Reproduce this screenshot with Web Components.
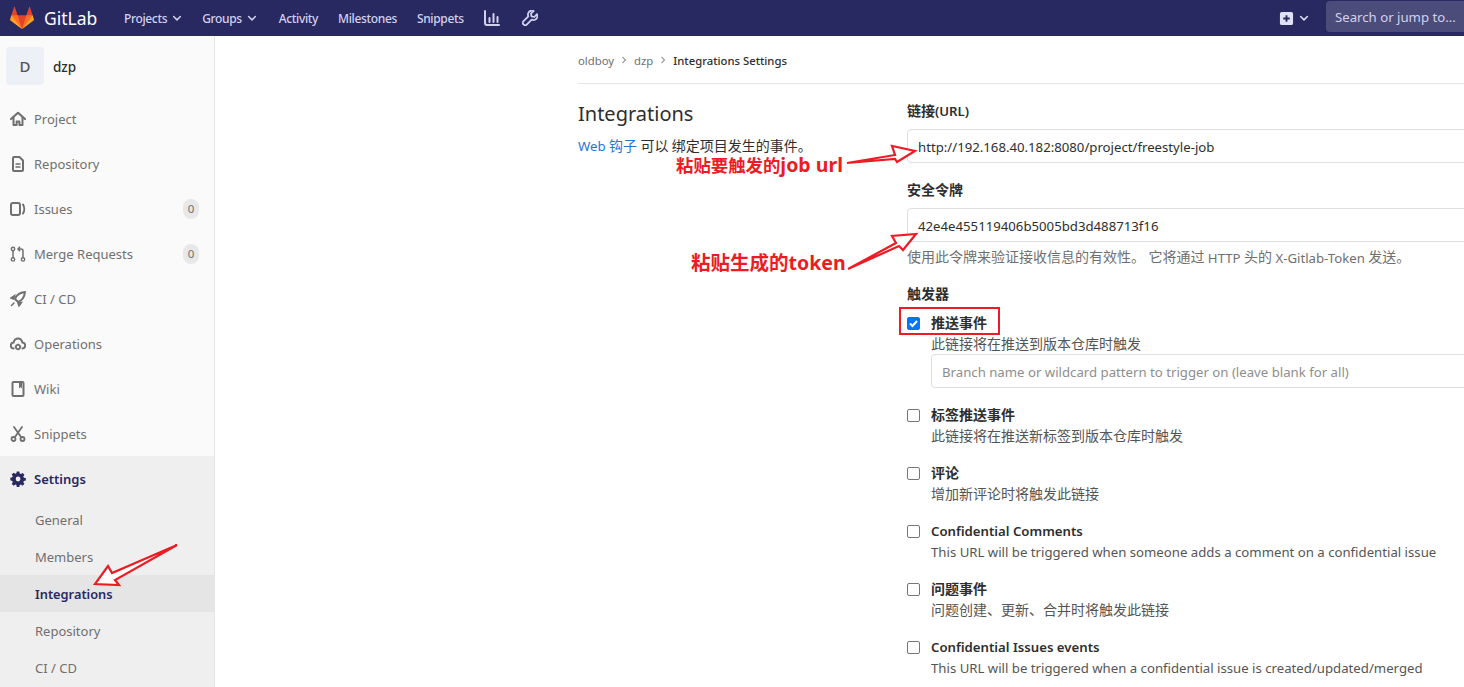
<!DOCTYPE html>
<html lang="zh">
<head>
<meta charset="utf-8">
<title>Integrations Settings</title>
<style>
    html, body {
        margin: 0;
        height: 687px;
        overflow: hidden;
        background: #fff;
        font-family: "Noto Sans", "Noto Sans CJK SC", sans-serif;
        font-size: 14px;
        color: #2e2e2e;
    }
</style>
</head>
<body>
<gl-app></gl-app>

<script>
const ICONS = {
    home: '<path d="M1 8 8 1.800 15 8" fill="none" stroke="currentColor" stroke-width="2.200" stroke-linejoin="round" stroke-linecap="round"/><path d="M3.500 6.500V14h3.100v-3.600h2.800V14h3.100V6.500" fill="none" stroke="currentColor" stroke-width="2" stroke-linejoin="round" stroke-linecap="round"/>',
    doc: '<path d="M3.500 1h6L13 4.500V14a1 1 0 0 1-1 1H4a1 1 0 0 1-1-1V2z" fill="none" stroke="currentColor" stroke-width="2" stroke-linejoin="round"/><path d="M5.500 8h5M5.500 11h5" stroke="currentColor" stroke-width="1.600"/>',
    issues: '<rect x="1" y="2" width="9" height="12" rx="2" fill="none" stroke="currentColor" stroke-width="2"/><path d="M13 3.500c1.600 2.500 1.600 6.500 0 9" fill="none" stroke="currentColor" stroke-width="2" stroke-linecap="round"/>',
    merge: '<circle cx="3" cy="3" r="1.700" fill="none" stroke="currentColor" stroke-width="1.400"/><circle cx="3" cy="13.400" r="1.700" fill="none" stroke="currentColor" stroke-width="1.400"/><circle cx="13" cy="13.400" r="1.700" fill="none" stroke="currentColor" stroke-width="1.400"/><path d="M3 5v6.600M13 11.600V5a2 2 0 0 0-2-2H8.500M10 .8 8 3l2 2.200" fill="none" stroke="currentColor" stroke-width="1.500"/>',
    rocket: '<path d="M15 1C10 1.500 6.500 4 5 8l3 3c4-1.500 6.500-5 7-10z" fill="none" stroke="currentColor" stroke-width="2" stroke-linejoin="round"/><path d="M4.500 4.500 1 7l2.500 1zM8 12l1 3 2.500-3.500zM1.500 14.500 4 12" fill="currentColor" stroke="currentColor" stroke-width="1.500" stroke-linecap="round"/>',
    cloud: '<path d="M3.500 12.500C1.800 12.300.8 11 .8 9.500c0-1.600 1.200-2.900 2.800-3C4.200 4 5.900 2.500 8 2.500s3.800 1.500 4.400 4c1.600.1 2.800 1.400 2.800 3 0 1.500-1 2.800-2.700 3" fill="none" stroke="currentColor" stroke-width="2" stroke-linecap="round"/><circle cx="8" cy="11" r="2.100" fill="none" stroke="currentColor" stroke-width="1.800"/><path d="M8 7.800v1M8 13.200v1M4.800 11h1M10.200 11h1" stroke="currentColor" stroke-width="1.600"/>',
    book: '<rect x="2.500" y="1" width="11" height="14" rx="1" fill="none" stroke="currentColor" stroke-width="2"/><path d="M9 1h3v6.500L10.500 6 9 7.500z" fill="currentColor"/>',
    scissors: '<circle cx="3.500" cy="13" r="2" fill="none" stroke="currentColor" stroke-width="1.800"/><circle cx="12.500" cy="13" r="2" fill="none" stroke="currentColor" stroke-width="1.800"/><path d="M4.800 11.300 12 1M11.200 11.300 4 1" stroke="currentColor" stroke-width="1.800" stroke-linecap="round"/>',
    gear: '<path fill-rule="evenodd" fill="currentColor" d="M6.600.5h2.800l.4 2.100 1.300.6 1.800-1.200 2 2-1.200 1.800.6 1.300 2.100.4v2.800l-2.100.4-.6 1.300 1.200 1.800-2 2-1.800-1.200-1.300.6-.4 2.100H6.600l-.4-2.100-1.300-.6-1.800 1.200-2-2 1.200-1.800-.6-1.300L-.4 10V7.200l2.100-.4.6-1.300L1.100 3.700l2-2 1.800 1.200 1.300-.6zM8 6a2.600 2.600 0 1 0 0 5.200A2.600 2.600 0 0 0 8 6z" transform="translate(.7 .1) scale(.92)"/>',
    chart: '<path d="M1 1v12a2 2 0 0 0 2 2h12" fill="none" stroke="currentColor" stroke-width="2" stroke-linecap="round"/><path d="M5.500 8v4M9.500 4v8M13.500 7v5" stroke="currentColor" stroke-width="2" stroke-linecap="round"/>',
    wrench: '<path d="M15 4.200 12.300 7 9.500 6.300 8.900 3.600 11.700 1C9.500.2 7.200 1 6.300 3c-.5 1.100-.4 2.300 0 3.300L1.300 11.300a2 2 0 0 0 0 2.900l.5.500a2 2 0 0 0 2.900 0l5-5c1 .4 2.300.5 3.400 0 2-.9 2.800-3.300 1.900-5.500z" fill="none" stroke="currentColor" stroke-width="1.800" stroke-linejoin="round"/>',
    plus: '<path fill-rule="evenodd" fill="currentColor" d="M3 1h10a2 2 0 0 1 2 2v10a2 2 0 0 1-2 2H3a2 2 0 0 1-2-2V3a2 2 0 0 1 2-2zm4 3.500V7H4.500v2H7v2.500h2V9h2.500V7H9V4.500z"/>',
    chevron: '<path d="M3.500 6 8 10.500 12.500 6" fill="none" stroke="currentColor" stroke-width="2" stroke-linecap="round" stroke-linejoin="round"/>'
};

const icon = (name, size) => `<svg width="${size}" height="${size}" viewBox="0 0 16 16" aria-hidden="true">${ICONS[name]}</svg>`;

// chinese runs are set a bit bigger than the latin around them
const zh = (text) => text.replace(/[\u3000-\u9fff\uff00-\uffef]+/g, (run) => `<span class="zh">${run}</span>`);

class GlNavbar extends HTMLElement {
    constructor() {
        super();
        this.attachShadow({ mode: 'open' });
        this.shadowRoot.innerHTML = `
            <style>
                :host {
                    display: flex;
                    align-items: center;
                    height: 36px;
                    width: 1626px;
                    flex: none;
                    background: #292961;
                    color: #d1d1f0;
                    font-size: 12px;
                    letter-spacing: -.35px;
                    font-weight: 500;
                }
                .logo {
                    display: flex;
                    align-items: center;
                    margin-left: 10px;
                    width: 114px;
                    color: #fff;
                    font-size: 17.500px;
                    letter-spacing: 0;
                    font-weight: 400;
                }
                .logo svg { margin-right: 10px; }
                a {
                    display: flex;
                    align-items: center;
                    margin-right: 20px;
                    white-space: nowrap;
                }
                a svg { margin: 0 -1px 0 4px; }
                .wide { margin-right: 22px; }
                .tool { margin-right: 22px; }
                .tool svg { margin: 0; display: block; }
                .create {
                    display: flex;
                    align-items: center;
                    gap: 4px;
                    margin-left: auto;
                    color: #e1e1f5;
                }
                .search {
                    margin-left: 16px;
                    width: 300px;
                    height: 31px;
                    line-height: 33px;
                    margin-top: -3px;
                    box-sizing: border-box;
                    padding-left: 9px;
                    border-radius: 4px;
                    background: #4c4c7a;
                    color: #d1d1f0;
                    font-size: 13.200px;
                    letter-spacing: 0;
                    font-weight: 400;
                }
            </style>
            <div class="logo">
                <svg width="24" height="24" viewBox="0 0 36 36" aria-hidden="true">
                    <path fill="#e24329" d="M2 14l9.380 9v-9l-4-12.280c-.205-.632-1.176-.632-1.380 0z"/>
                    <path fill="#e24329" d="M34 14l-9.380 9v-9l4-12.280c.205-.632 1.176-.632 1.380 0z"/>
                    <path fill="#e24329" d="M18 34.380 3 14h30z"/>
                    <path fill="#fc6d26" d="M18 34.380 11.380 14H2l4 11z"/>
                    <path fill="#fc6d26" d="M18 34.380 24.620 14H34l-4 11z"/>
                    <path fill="#fca326" d="M2 14 .1 20.160c-.18.565 0 1.200.5 1.560l17.420 12.660z"/>
                    <path fill="#fca326" d="M34 14l1.900 6.160c.18.565 0 1.200-.5 1.560L18 34.380z"/>
                </svg>
                GitLab
            </div>
            <a>Projects ${icon('chevron', 12)}</a>
            <a class="wide">Groups ${icon('chevron', 12)}</a>
            <a>Activity</a>
            <a>Milestones</a>
            <a>Snippets</a>
            <a class="tool">${icon('chart', 16)}</a>
            <a class="tool">${icon('wrench', 16)}</a>
            <div class="create">${icon('plus', 15)}${icon('chevron', 12)}</div>
            <div class="search">Search or jump to...</div>
        `;
    }
}

class GlNavItem extends HTMLElement {
    constructor() {
        super();
        this.attachShadow({ mode: 'open' });
        const name = this.getAttribute('icon');
        const count = this.getAttribute('count');
        this.shadowRoot.innerHTML = `
            <style>
                :host {
                    display: flex;
                    align-items: center;
                    height: 45px;
                    padding: 0 15px 0 10px;
                    color: #707070;
                    font-size: 13px;
                }
                :host([active]) {
                    color: #292961;
                    font-weight: 600;
                }
                svg { margin-right: 8px; flex: none; }
                .count {
                    margin-left: auto;
                    min-width: 16px;
                    height: 20px;
                    line-height: 20px;
                    text-align: center;
                    border-radius: 10px;
                    background: #e8e8e8;
                    font-size: 11.500px;
                }
            </style>
            ${icon(name, 16)}
            <slot></slot>
            ${count ? `<span class="count">${count}</span>` : ''}
        `;
    }
}

class GlSubItem extends HTMLElement {
    constructor() {
        super();
        this.attachShadow({ mode: 'open' });
        this.shadowRoot.innerHTML = `
            <style>
                :host {
                    display: block;
                    height: 37px;
                    line-height: 39px;
                    padding-left: 35px;
                    color: #707070;
                    font-size: 13px;
                }
                :host([active]) {
                    background: #e5e5e5;
                    color: #292961;
                    font-size: 12.800px;
                    font-weight: 600;
                }
            </style>
            <slot></slot>
        `;
    }
}

class GlSidebar extends HTMLElement {
    constructor() {
        super();
        this.attachShadow({ mode: 'open' });
        this.shadowRoot.innerHTML = `
            <style>
                :host {
                    display: block;
                    flex: none;
                    width: 214px;
                    height: 651px;
                    overflow: hidden;
                    background: #fafafa;
                    border-right: 1px solid #e5e5e5;
                }
                .context {
                    display: flex;
                    align-items: center;
                    height: 60px;
                    padding-left: 6px;
                    font-size: 13.500px;
                    font-weight: 500;
                    color: #2e2e2e;
                }
                .context span { margin-top: 2px; }
                .avatar {
                    width: 38px;
                    height: 38px;
                    margin: 0 9px 0 0;
                    border-radius: 4px;
                    background: #eef0f8;
                    line-height: 38px;
                    text-align: center;
                    color: #555;
                    font-size: 15px;
                }
                .settings {
                    background: #efefef;
                    height: 240px;
                }
            </style>
            <div class="context"><div class="avatar">D</div><span>dzp</span></div>
            <gl-nav-item icon="home">Project</gl-nav-item>
            <gl-nav-item icon="doc">Repository</gl-nav-item>
            <gl-nav-item icon="issues" count="0">Issues</gl-nav-item>
            <gl-nav-item icon="merge" count="0">Merge Requests</gl-nav-item>
            <gl-nav-item icon="rocket">CI / CD</gl-nav-item>
            <gl-nav-item icon="cloud">Operations</gl-nav-item>
            <gl-nav-item icon="book">Wiki</gl-nav-item>
            <gl-nav-item icon="scissors">Snippets</gl-nav-item>
            <div class="settings">
                <gl-nav-item icon="gear" active>Settings</gl-nav-item>
                <gl-sub-item>General</gl-sub-item>
                <gl-sub-item>Members</gl-sub-item>
                <gl-sub-item active>Integrations</gl-sub-item>
                <gl-sub-item>Repository</gl-sub-item>
                <gl-sub-item>CI / CD</gl-sub-item>
            </div>
        `;
    }
}

class GlTextField extends HTMLElement {
    constructor() {
        super();
        this.attachShadow({ mode: 'open' });
        this.shadowRoot.innerHTML = `
            <style>
                :host {
                    display: block;
                    box-sizing: border-box;
                    height: 34px;
                    line-height: 34px;
                    padding-left: 10px;
                    border: 1px solid #dfdfdf;
                    border-radius: 4px;
                    background: #fff;
                    font-size: 13.200px;
                    color: #2e2e2e;
                    white-space: nowrap;
                    overflow: hidden;
                }
                :host([placeholder]) { color: #8e8e8e; }
            </style>
            <slot></slot>
        `;
    }
}

class GlTrigger extends HTMLElement {
    constructor() {
        super();
        this.attachShadow({ mode: 'open' });
        const checked = this.hasAttribute('checked');
        this.shadowRoot.innerHTML = `
            <style>
                :host {
                    display: grid;
                    grid-template-columns: 13px 1fr;
                    column-gap: 11px;
                    height: 58px;
                    align-content: start;
                }
                .box {
                    box-sizing: border-box;
                    width: 13px;
                    height: 13px;
                    margin-top: 4px;
                    border: 1px solid #767676;
                    border-radius: 2px;
                    background: #fff;
                }
                :host([checked]) .box {
                    border-color: #0075ff;
                    background: #0075ff;
                }
                .box svg { display: block; }
                .title {
                    height: 21px;
                    line-height: 21px;
                    font-size: 13.200px;
                    font-weight: 600;
                    color: #2e2e2e;
                }
                .desc {
                    grid-column: 2;
                    height: 21px;
                    line-height: 21px;
                    font-size: 13.200px;
                    color: #555;
                    white-space: nowrap;
                }
                .zh { font-size: 14px; line-height: 1; }
                ::slotted(gl-text-field) { grid-column: 2; margin-top: -1px; }
            </style>
            <div class="box">${checked ? '<svg width="11" height="11" viewBox="0 0 11 11"><path d="M2 5.500 4.500 8 9 3" fill="none" stroke="#fff" stroke-width="2"/></svg>' : ''}</div>
            <div class="title">${zh(this.getAttribute('label'))}</div>
            <div class="desc">${zh(this.getAttribute('desc'))}</div>
            <slot></slot>
        `;
    }
}

class GlBreadcrumb extends HTMLElement {
    constructor() {
        super();
        this.attachShadow({ mode: 'open' });
        const sep = '<svg width="8" height="8" viewBox="0 0 8 8"><path d="M2.500 1 5.500 4l-3 3" fill="none" stroke="#999" stroke-width="1.100"/></svg>';
        this.shadowRoot.innerHTML = `
            <style>
                :host {
                    display: flex;
                    align-items: center;
                    gap: 6px;
                    height: 47px;
                    box-sizing: border-box;
                    border-bottom: 1px solid #e5e5e5;
                    font-size: 11.300px;
                    color: #707070;
                }
                b { font-weight: 500; color: #2e2e2e; }
            </style>
            <span>oldboy</span>${sep}
            <span>dzp</span>${sep}
            <b>Integrations Settings</b>
        `;
    }
}

class GlIntegrationForm extends HTMLElement {
    constructor() {
        super();
        this.attachShadow({ mode: 'open' });
        this.shadowRoot.innerHTML = `
            <style>
                :host {
                    display: grid;
                    grid-template-columns: 329px 800px;
                }
                h4 {
                    margin: 16px 0 0;
                    font-size: 20px;
                    line-height: 27px;
                    font-weight: 400;
                    color: #2e2e2e;
                }
                .intro {
                    margin: 9px 0 0;
                    line-height: 20px;
                    font-size: 13.200px;
                }
                .intro a { color: #1f78d1; }
                label {
                    display: block;
                    height: 18px;
                    line-height: 18px;
                    font-size: 13.200px;
                    font-weight: 600;
                }
                .zh { font-size: 14px; }
                .form { padding-top: 18px; }
                .second { margin-top: 18px; }
                .field { margin-top: 9px; }
                .help {
                    height: 29px;
                    padding-top: 1px;
                    line-height: 30px;
                    color: #707070;
                    font-size: 13.200px;
                    white-space: nowrap;
                }
                .help .zh { line-height: 1; vertical-align: 1px; }
                .third { margin-top: 13px; margin-bottom: 10px; }
                .tall { height: 92px; }
            </style>
            <div>
                <h4>Integrations</h4>
                <p class="intro"><a>Web ${zh('钩子')}</a> ${zh('可以')} ${zh('绑定项目发生的事件。')}</p>
            </div>
            <div class="form">
                <label>${zh('链接')}(URL)</label>
                <gl-text-field class="field">http://192.168.40.182:8080/project/freestyle-job</gl-text-field>
                <label class="second">${zh('安全令牌')}</label>
                <gl-text-field class="field">42e4e455119406b5005bd3d488713f16</gl-text-field>
                <div class="help">${zh('使用此令牌来验证接收信息的有效性。 它将通过 HTTP 头的 X-Gitlab-Token 发送。')}</div>
                <label class="third">${zh('触发器')}</label>
                <gl-trigger class="tall" checked label="推送事件" desc="此链接将在推送到版本仓库时触发">
                    <gl-text-field placeholder>Branch name or wildcard pattern to trigger on (leave blank for all)</gl-text-field>
                </gl-trigger>
                <gl-trigger label="标签推送事件" desc="此链接将在推送新标签到版本仓库时触发"></gl-trigger>
                <gl-trigger label="评论" desc="增加新评论时将触发此链接"></gl-trigger>
                <gl-trigger label="Confidential Comments" desc="This URL will be triggered when someone adds a comment on a confidential issue"></gl-trigger>
                <gl-trigger label="问题事件" desc="问题创建、更新、合并时将触发此链接"></gl-trigger>
                <gl-trigger label="Confidential Issues events" desc="This URL will be triggered when a confidential issue is created/updated/merged"></gl-trigger>
            </div>
        `;
    }
}

// red marks drawn on top of the screenshot, these really are free placed
class GlAnnotations extends HTMLElement {
    constructor() {
        super();
        this.attachShadow({ mode: 'open' });
        this.shadowRoot.innerHTML = `
            <style>
                :host {
                    position: absolute;
                    left: 0;
                    top: 0;
                    width: 1464px;
                    height: 687px;
                    pointer-events: none;
                }
                svg { position: absolute; left: 0; top: 0; }
                span {
                    position: absolute;
                    color: #ed1c24;
                    font-size: 19.500px;
                    line-height: 24px;
                    font-weight: 700;
                    white-space: nowrap;
                }
                span .zh17 { position: static; font-size: 17.400px; }
                .box {
                    position: absolute;
                    left: 899px;
                    top: 307px;
                    width: 97px;
                    height: 24px;
                    border: 2px solid #ed1c24;
                }
            </style>
            <svg width="1464" height="687" fill="#fff" stroke="#ed1c24" stroke-width="2.200" stroke-linejoin="miter">
                <path d="M847 163 895 155 892 146 915 151 897 162 895 159Z"/>
                <path d="M848 269 896 243 892 236 916 234 903 250 899 246Z"/>
                <path d="M177 545 112 573 108 566 95 584 119 585 115 580Z"/>
            </svg>
            <span style="left:676px;top:153px"><span class="zh17">粘贴要触发的</span>job url</span>
            <span style="left:691px;top:251px">粘贴生成的token</span>
            <div class="box"></div>
        `;
    }
}

class GlApp extends HTMLElement {
    constructor() {
        super();
        this.attachShadow({ mode: 'open' });
        this.shadowRoot.innerHTML = `
            <style>
                :host {
                    display: flex;
                    flex-direction: column;
                    position: relative;
                    height: 687px;
                    overflow: hidden;
                }
                .page { display: flex; flex: 1; min-height: 0; }
                main { padding-left: 363px; width: 1129px; }
                gl-breadcrumb { margin-top: 1px; }
            </style>
            <gl-navbar></gl-navbar>
            <div class="page">
                <gl-sidebar></gl-sidebar>
                <main>
                    <gl-breadcrumb></gl-breadcrumb>
                    <gl-integration-form></gl-integration-form>
                </main>
            </div>
            <gl-annotations></gl-annotations>
        `;
    }
}

customElements.define('gl-nav-item', GlNavItem);
customElements.define('gl-sub-item', GlSubItem);
customElements.define('gl-navbar', GlNavbar);
customElements.define('gl-sidebar', GlSidebar);
customElements.define('gl-text-field', GlTextField);
customElements.define('gl-trigger', GlTrigger);
customElements.define('gl-breadcrumb', GlBreadcrumb);
customElements.define('gl-integration-form', GlIntegrationForm);
customElements.define('gl-annotations', GlAnnotations);
customElements.define('gl-app', GlApp);
</script>
</body>
</html>
